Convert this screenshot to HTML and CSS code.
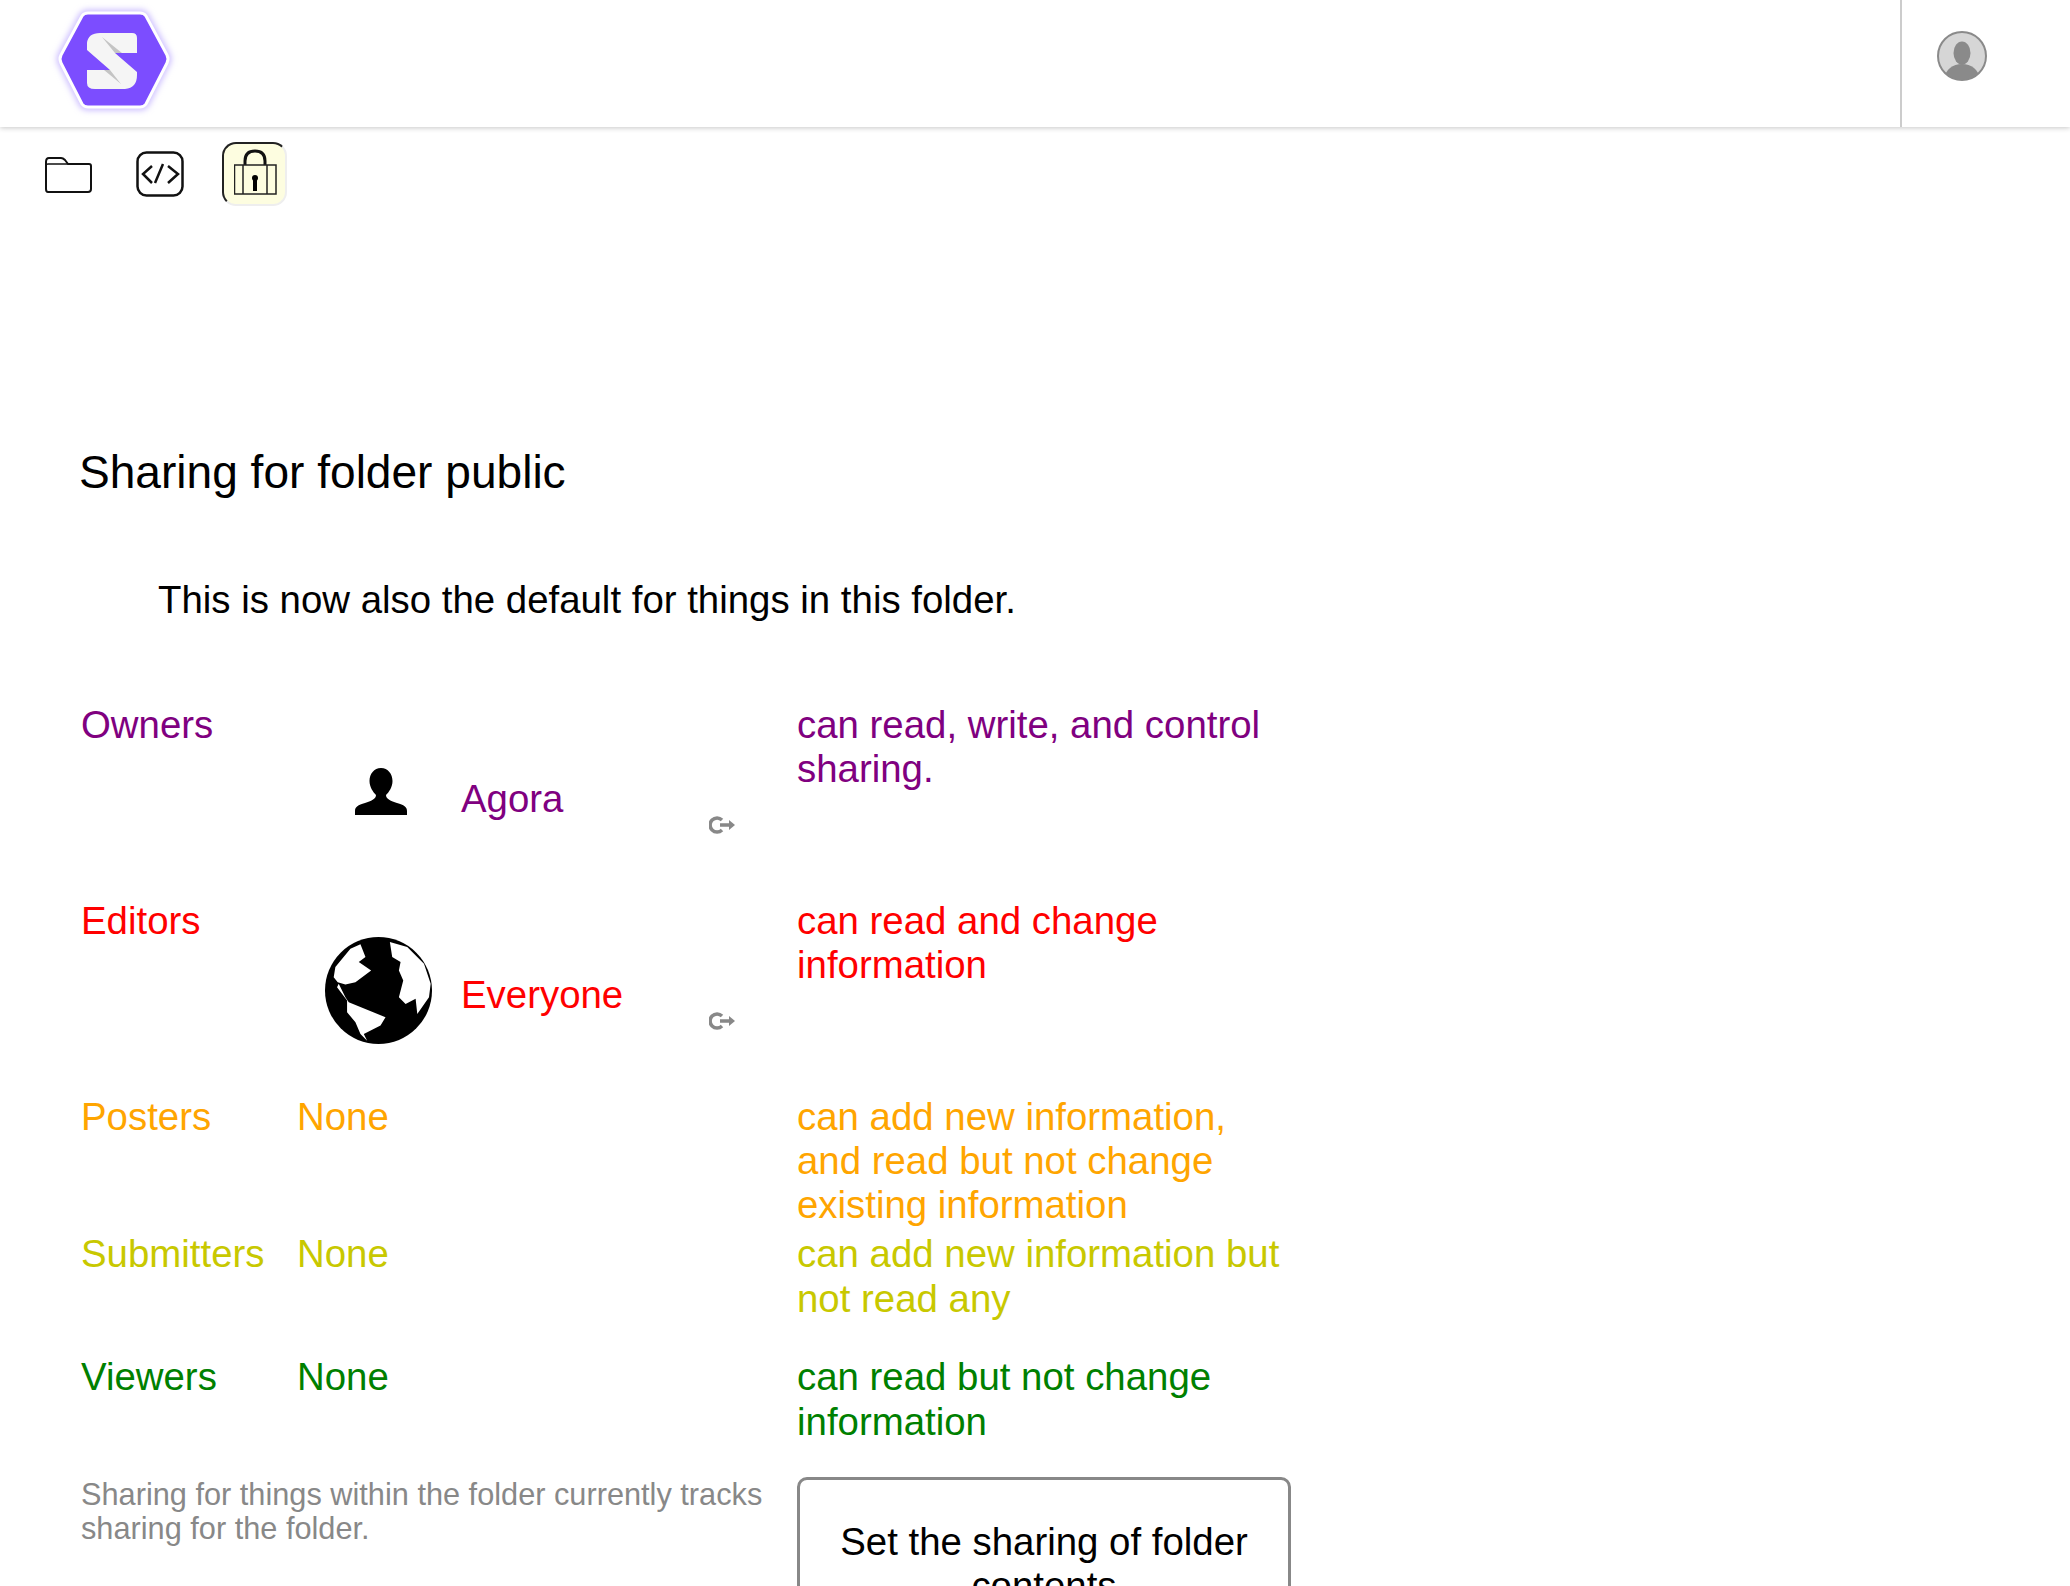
FILE: index.html
```html
<!DOCTYPE html>
<html lang="en">
<head>
<meta charset="utf-8">
<title>Sharing for folder public</title>
<link rel="stylesheet" href="styles.css">
</head>
<body>
<header class="topbar">
  <div class="brand">
    <svg class="logo" viewBox="0 0 120 110" width="120" height="110">
      <defs><filter id="glow" x="-20%" y="-20%" width="140%" height="140%"><feGaussianBlur stdDeviation="3"/></filter></defs>
      <path class="logo-glow" filter="url(#glow)" d="M36 7H88Q92 7 94 10L115 49Q117 53 115 57L94 98Q92 101 88 101H36Q32 101 30 98L9 57Q7 53 9 49L30 10Q32 7 36 7Z"/>
      <path class="logo-hex" d="M36 7H88Q92 7 94 10L115 49Q117 53 115 57L94 98Q92 101 88 101H36Q32 101 30 98L9 57Q7 53 9 49L30 10Q32 7 36 7Z"/>
      <path class="logo-s" d="M35 44L58 64H35V77Q35 83 43 83H73Q85 82 85 69V66L63 47H85V32Q85 27 80 27H48Q36 27 35 37Z"/>
      <path class="logo-cut" d="M50 31L70 47H63ZM52 64H58L69 78Z"/>
    </svg>
  </div>
  <div class="account">
    <svg viewBox="0 0 50 50" width="50" height="50">
      <circle class="av-bg" cx="25" cy="25" r="24"/>
      <clipPath id="avclip"><circle cx="25" cy="25" r="24"/></clipPath>
      <g clip-path="url(#avclip)">
        <ellipse class="av-fg" cx="25" cy="22" rx="8.500" ry="11.500"/>
        <ellipse class="av-fg" cx="25" cy="47" rx="17" ry="14"/>
      </g>
    </svg>
  </div>
</header>

<nav class="toolbar">
  <svg class="tool-folder" viewBox="0 0 48 37" width="48" height="37">
    <path class="line" d="M2 6Q2 2 5 2H17Q19 2 21 4L24 8H45Q47 8 47 10V33Q47 36 44 36H4Q2 36 2 33Z"/>
    <path class="line-thin" d="M2 9Q2 8 4 8H24"/>
  </svg>
  <svg class="tool-code" viewBox="0 0 48 46" width="48" height="46">
    <rect class="box" x="1.500" y="1.500" width="45" height="43" rx="9"/>
    <path class="code-line" d="M16 15L7 23L16 32M32 15L42 23L32 32M27 13L19 32"/>
  </svg>
  <div class="tool-lock">
    <svg viewBox="0 0 44 48" width="44" height="48">
      <path class="shackle" d="M11 16V12Q11 2 21 2Q31 2 31 12V16"/>
      <rect class="lock-line" x="0.500" y="16" width="41.500" height="29"/>
      <path class="lock-line" d="M9 16V45M33 16V45"/>
      <circle cx="21" cy="29" r="3"/>
      <rect x="19" y="29" width="4" height="13"/>
    </svg>
  </div>
</nav>

<main class="content">
  <h1 class="title">Sharing for folder public</h1>
  <p class="notice">This is now also the default for things in this folder.</p>

  <section class="perm perm-owners">
    <div class="perm-label">Owners</div>
    <div class="agent">
      <svg class="agent-icon" viewBox="0 0 52 47" width="52" height="47">
        <path d="M26 0C33 0 37.500 6 37.500 13C37.500 19 34 24 31 27C31 31 36 33 42 35C49 37 52 39 52 43V47H0V43C0 39 3 37 10 35C16 33 21 31 21 27C18 24 14.500 19 14.500 13C14.500 6 19 0 26 0Z"/>
      </svg>
      <span class="agent-name">Agora</span>
      <svg class="agent-go" viewBox="0 0 26 18" width="26" height="18">
        <path class="go-ring" d="M13 4A7 7 0 1 0 13 14M11 9H23"/>
        <path class="go-head" d="M20 4L26 9L20 14Z"/>
      </svg>
    </div>
    <div class="perm-desc">can read, write, and control sharing.</div>
  </section>

  <section class="perm perm-editors">
    <div class="perm-label">Editors</div>
    <div class="agent">
      <svg class="agent-globe" viewBox="74 590 320 320" width="107" height="107">
        <circle cx="234" cy="750" r="160"/>
        <path class="land" d="M180 612L195 650L175 665L212 690L165 725L135 732L112 725L100 710L105 680L150 625Z"/>
        <path class="land" d="M115 730L135 770L145 785L255 830L240 855L190 880L200 900L180 880L165 845L140 815L140 780L110 740Z"/>
        <path class="land" d="M268 605L275 650L300 665L295 690L308 720L295 770L315 790L345 775L350 820L385 770L390 730L370 670L320 620Z"/>
      </svg>
      <span class="agent-name">Everyone</span>
      <svg class="agent-go" viewBox="0 0 26 18" width="26" height="18">
        <path class="go-ring" d="M13 4A7 7 0 1 0 13 14M11 9H23"/>
        <path class="go-head" d="M20 4L26 9L20 14Z"/>
      </svg>
    </div>
    <div class="perm-desc">can read and change information</div>
  </section>

  <section class="perm perm-posters">
    <div class="perm-label">Posters</div>
    <div class="perm-none">None</div>
    <div class="perm-desc">can add new information, and read but not change existing information</div>
  </section>

  <section class="perm perm-submitters">
    <div class="perm-label">Submitters</div>
    <div class="perm-none">None</div>
    <div class="perm-desc">can add new information but not read any</div>
  </section>

  <section class="perm perm-viewers">
    <div class="perm-label">Viewers</div>
    <div class="perm-none">None</div>
    <div class="perm-desc">can read but not change information</div>
  </section>

  <section class="footer-row">
    <p class="track-note">Sharing for things within the folder currently tracks sharing for the folder.</p>
    <button class="set-btn" type="button">Set the sharing of folder contents</button>
  </section>
</main>
</body>
</html>
```

FILE: styles.css
```css
html, body {
  margin: 0;
  height: 1586px;
  overflow: hidden;
  background: #fff;
  color: #000;
  font-family: "Liberation Sans", Arial, sans-serif;
}

.topbar {
  display: flex;
  justify-content: space-between;
  height: 127px;
  box-shadow: 0 1px 5px rgba(0, 0, 0, .22);
}
.brand { padding-left: 52px; }
.logo { display: block; overflow: visible; margin-top: 6px; }
.logo-glow { fill: none; stroke: #c4b4ff; stroke-width: 6; }
.logo-hex { fill: #7c4dff; stroke: #fff; stroke-width: 3; }
.logo-s { fill: #f5f5f5; }
.logo-cut { fill: #c4c4c4; }

.account {
  width: 170px;
  border-left: 2px solid #ccc;
  padding: 31px 0 0 35px;
  box-sizing: border-box;
}
.account svg { display: block; }
.av-bg { fill: #d6d6d6; stroke: #8a8a8a; stroke-width: 2; }
.av-fg { fill: #8a8a8a; }

.toolbar {
  display: flex;
  align-items: center;
  padding: 15px 0 0 44px;
  height: 64px;
}
.tool-folder { margin-right: 44px; }
.tool-code { margin-right: 38px; }
.line { fill: none; stroke: #111; stroke-width: 2; stroke-linejoin: round; }
.line-thin { fill: none; stroke: #111; stroke-width: 1.500; }
.code-line { fill: none; stroke: #111; stroke-width: 2.500; }
.box { fill: #fff; stroke: #111; stroke-width: 2.500; }
.tool-lock {
  box-sizing: border-box;
  width: 65px;
  height: 64px;
  padding: 5px 0 0 10px;
  background: #fdfde0;
  border-radius: 14px;
  border-top: 2px solid #222;
  border-left: 2px solid #222;
  border-right: 2px solid #eee;
  border-bottom: 2px solid #eee;
}
.tool-lock svg { display: block; }
.shackle { fill: none; stroke: #111; stroke-width: 3; }
.lock-line { fill: none; stroke: #222; stroke-width: 1.500; }

.content {
  padding: 240px 0 0 80px;
  width: 1220px;
  box-sizing: border-box;
}
.title {
  margin: 0 0 0 -1px;
  font-size: 46.080px;
  font-weight: 400;
  line-height: 52px;
}
.notice {
  margin: 80px 0 0 78px;
  font-size: 38.400px;
  line-height: 44px;
}

.perm {
  display: grid;
  grid-template-columns: 217px 500px 494px;
  font-size: 38.400px;
  line-height: 44px;
}
.perm-label { padding-left: 1px; }
.perm-owners { color: #800080; margin-top: 81px; height: 196px; }
.perm-editors { color: #f00; height: 196px; }
.perm-posters { color: #ffa500; height: 136px; }
.perm-submitters { color: #c8c800; height: 123px; line-height: 45px; }
.perm-viewers { color: #008000; height: 123px; line-height: 45px; }

.agent {
  position: relative;
  display: flex;
  align-items: flex-start;
}
.agent-icon { flex: none; fill: #000; margin: 65px 54px 0 58px; }
.agent-globe { flex: none; fill: #000; margin: 38px 29px 0 28px; }
.agent-name { margin-top: 74px; }
.agent-go {
  position: absolute;
  left: 412px;
  top: 113px;
}
.go-ring { fill: none; stroke: #888; stroke-width: 3.500; }
.go-head { fill: #888; }
.land { fill: #fff; }

.footer-row {
  display: grid;
  grid-template-columns: 717px 494px;
}
.track-note {
  margin: 1px 0 0 1px;
  font-size: 30.720px;
  line-height: 34px;
  color: #888;
}
.set-btn {
  box-sizing: border-box;
  width: 494px;
  padding: 40px 30px;
  background: #fff;
  border: 3px solid #888;
  border-radius: 10px;
  font: inherit;
  font-size: 38.400px;
  line-height: 44px;
  color: #000;
  text-align: center;
}
```
